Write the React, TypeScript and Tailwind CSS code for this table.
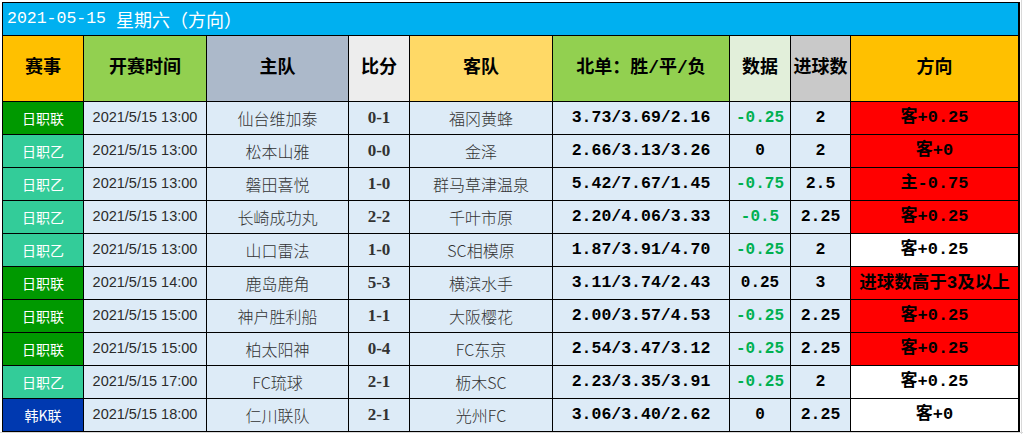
import React from "react";

type Row = {
  league: string;
  lc: string;
  time: string;
  home: string;
  score: string;
  away: string;
  odds: string;
  data: string;
  goals: string;
  dir: string;
  red: boolean;
};

const rows: Row[] = [
  { league: "日职联", lc: "bg-[#009900]", time: "2021/5/15 13:00", home: "仙台维加泰", score: "0-1", away: "福冈黄蜂", odds: "3.73/3.69/2.16", data: "-0.25", goals: "2", dir: "客+0.25", red: true },
  { league: "日职乙", lc: "bg-[#33cc99]", time: "2021/5/15 13:00", home: "松本山雅", score: "0-0", away: "金泽", odds: "2.66/3.13/3.26", data: "0", goals: "2", dir: "客+0", red: true },
  { league: "日职乙", lc: "bg-[#33cc99]", time: "2021/5/15 13:00", home: "磐田喜悦", score: "1-0", away: "群马草津温泉", odds: "5.42/7.67/1.45", data: "-0.75", goals: "2.5", dir: "主-0.75", red: true },
  { league: "日职乙", lc: "bg-[#33cc99]", time: "2021/5/15 13:00", home: "长崎成功丸", score: "2-2", away: "千叶市原", odds: "2.20/4.06/3.33", data: "-0.5", goals: "2.25", dir: "客+0.25", red: true },
  { league: "日职乙", lc: "bg-[#33cc99]", time: "2021/5/15 13:00", home: "山口雷法", score: "1-0", away: "SC相模原", odds: "1.87/3.91/4.70", data: "-0.25", goals: "2", dir: "客+0.25", red: false },
  { league: "日职联", lc: "bg-[#009900]", time: "2021/5/15 14:00", home: "鹿岛鹿角", score: "5-3", away: "横滨水手", odds: "3.11/3.74/2.43", data: "0.25", goals: "3", dir: "进球数高于3及以上", red: true },
  { league: "日职联", lc: "bg-[#009900]", time: "2021/5/15 15:00", home: "神户胜利船", score: "1-1", away: "大阪樱花", odds: "2.00/3.57/4.53", data: "-0.25", goals: "2.25", dir: "客+0.25", red: true },
  { league: "日职联", lc: "bg-[#009900]", time: "2021/5/15 15:00", home: "柏太阳神", score: "0-4", away: "FC东京", odds: "2.54/3.47/3.12", data: "-0.25", goals: "2.25", dir: "客+0.25", red: true },
  { league: "日职乙", lc: "bg-[#33cc99]", time: "2021/5/15 17:00", home: "FC琉球", score: "2-1", away: "枥木SC", odds: "2.23/3.35/3.91", data: "-0.25", goals: "2", dir: "客+0.25", red: false },
  { league: "韩K联", lc: "bg-[#0039b0]", time: "2021/5/15 18:00", home: "仁川联队", score: "2-1", away: "光州FC", odds: "3.06/3.40/2.62", data: "0", goals: "2.25", dir: "客+0", red: false },
];

const cjk = "font-['Noto_Sans_CJK_SC',sans-serif]";
const mono = "font-['Liberation_Mono','Noto_Sans_CJK_SC',monospace]";

const headers: { t: string; bg: string }[] = [
  { t: "赛事", bg: "bg-[#ffc000]" },
  { t: "开赛时间", bg: "bg-[#92d050]" },
  { t: "主队", bg: "bg-[#acb9ca]" },
  { t: "比分", bg: "bg-[#ededed]" },
  { t: "客队", bg: "bg-[#ffd966]" },
  { t: "北单：胜/平/负", bg: "bg-[#92d050]" },
  { t: "数据", bg: "bg-[#e2efda]" },
  { t: "进球数", bg: "bg-[#c9c9c9]" },
  { t: "方向", bg: "bg-[#ffc000]" },
];

const cell = "flex items-center justify-center overflow-hidden whitespace-nowrap";

export default function App() {
  return (
    <div className="w-[1023px] h-[434px] bg-white relative overflow-hidden">
      <div className="absolute left-0 right-0 top-[432px] h-px bg-[#d9d9d9]" />
      <div className="absolute top-0 bottom-0 left-[1021px] w-px bg-[#d9d9d9]" />
      <div className="pt-[2px] pl-[2px]">
        <div className="inline-grid bg-black pl-px pt-px pr-[2px] pb-[2px] gap-px grid-cols-[80px_122px_141px_60px_142px_176px_60px_59px_167px] grid-rows-[32px_65px_repeat(10,32px)]">
          <div className="col-span-9 bg-[#00b0f0] flex items-center pl-[4px] text-white whitespace-pre">
            <span className="font-['Liberation_Mono',monospace] text-[16.5px]">2021-05-15 </span>
            <span className={`${cjk} text-[18px]`}>星期六（方向）</span>
          </div>
          {headers.map((h) => (
            <div key={h.t} className={`${cell} ${h.bg} ${mono} font-bold text-[18px] text-black`}>
              {h.t}
            </div>
          ))}
          {rows.map((r, i) => (
            <React.Fragment key={i}>
              <div className={`${cell} ${r.lc} ${cjk} text-[14px] text-white`}>{r.league}</div>
              <div className={`${cell} bg-[#ddebf7] font-['Liberation_Sans',sans-serif] text-[14.5px] text-[#2b2b2b]`}>{r.time}</div>
              <div className={`${cell} bg-[#ddebf7] ${cjk} text-[16px] text-[#333333] font-light`}>{r.home}</div>
              <div className={`${cell} bg-[#ddebf7] font-['Liberation_Serif',serif] font-bold text-[17px] text-[#333333]`}>{r.score}</div>
              <div className={`${cell} bg-[#ddebf7] ${cjk} text-[16px] text-[#333333] font-light`}>{r.away}</div>
              <div className={`${cell} bg-[#ddebf7] ${mono} font-bold text-[16.5px] text-black`}>{r.odds}</div>
              <div className={`${cell} bg-[#ddebf7] ${mono} font-bold text-[16px] ${r.data.startsWith("-") ? "text-[#00b050]" : "text-black"}`}>{r.data}</div>
              <div className={`${cell} bg-[#ddebf7] ${mono} font-bold text-[16.5px] text-black`}>{r.goals}</div>
              <div className={`${cell} ${r.red ? "bg-[#ff0000]" : "bg-white"} ${mono} font-bold ${r.dir.length > 8 ? "text-[17.5px]" : "text-[17px]"} text-black`}>{r.dir}</div>
            </React.Fragment>
          ))}
        </div>
      </div>
    </div>
  );
}
